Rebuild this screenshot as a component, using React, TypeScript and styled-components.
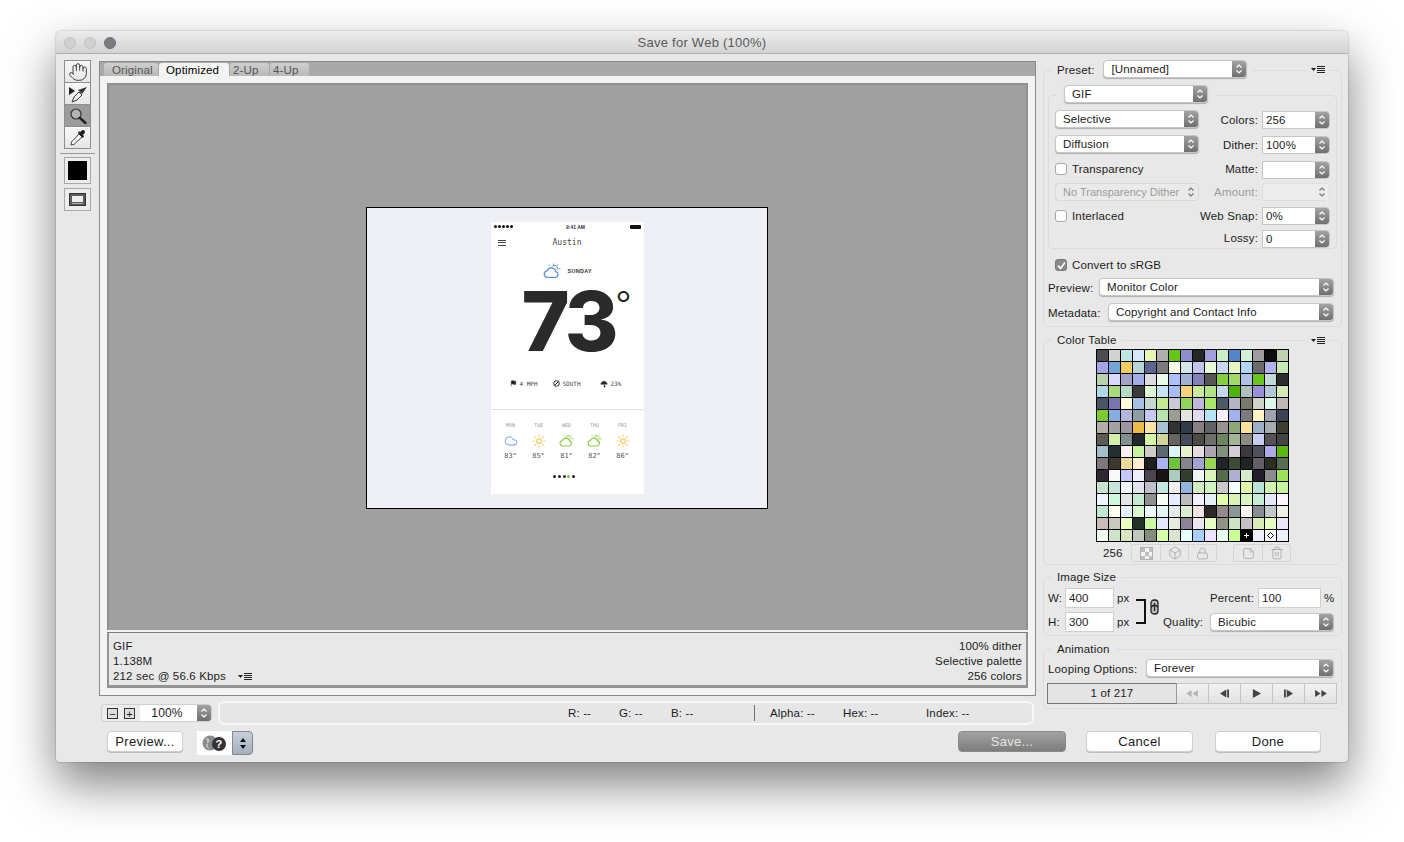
import React from "react";
import styled, { createGlobalStyle } from "styled-components";
import { Hand, Cloud, Sun, Flag, Umbrella, Lock, Box, StickyNote, Trash2 } from "lucide-react";

const GlobalStyle = createGlobalStyle`
    html, body {
        margin: 0;
        background: #fff;
    }
    body {
        font-family: "Liberation Sans", Arial, sans-serif;
        font-size: 12px;
        color: #1c1c1c;
        letter-spacing: 0.15px;
    }
    * {
        box-sizing: border-box;
    }
`;

const PANEL = "#e8e8e8";

const Page = styled.div`
    height: 842px;
    padding: 31px 0 0 56px;
    overflow: hidden;
`;

const Window = styled.div`
    width: 1292px;
    height: 731px;
    background: ${PANEL};
    border-radius: 5px 5px 4px 4px;
    box-shadow: 0 22px 48px rgba(0, 0, 0, 0.5), 0 0 2px rgba(0, 0, 0, 0.35);
    overflow: hidden;
`;

const TitleBar = styled.div`
    height: 23px;
    display: flex;
    align-items: center;
    padding: 1px 0 0 8px;
    gap: 8px;
    position: relative;
    background: linear-gradient(#ececec, #d3d3d3);
    border-bottom: 1px solid #b1b1b1;
`;

const Light = styled.span<{ $on?: boolean }>`
    width: 12px;
    height: 12px;
    border-radius: 50%;
    background: ${(p) => (p.$on ? "#7b7b82" : "#d0d0d0")};
    border: 1px solid ${(p) => (p.$on ? "#6e6e74" : "#c2c2c2")};
`;

const Title = styled.div`
    position: absolute;
    left: 0;
    right: 0;
    text-align: center;
    font-size: 13px;
    color: #5a5a5a;
    letter-spacing: 0.25px;
`;

const MainRow = styled.div`
    height: 673px;
    display: flex;
`;

/* left tools */
const ToolColumn = styled.div`
    width: 43px;
    padding: 6px 0 0 8px;
    display: flex;
    flex-direction: column;
`;

const ToolStack = styled.div`
    width: 27px;
    border: 1px solid #8e8e8e;
    display: flex;
    flex-direction: column;
`;

const Tool = styled.div<{ $active?: boolean }>`
    height: 22px;
    display: flex;
    align-items: center;
    justify-content: center;
    background: ${(p) => (p.$active ? "#9c9c9c" : "linear-gradient(#f8f8f8, #e6e6e6)")};
    &:first-child {
        height: 21px;
    }
    & + & {
        border-top: 1px solid #8e8e8e;
    }
`;

const ToolSeparator = styled.div`
    width: 35px;
    height: 1px;
    margin: 4px 0 3px -4px;
    background: #9a9a9a;
`;

const SwatchBox = styled.div`
    width: 27px;
    height: 27px;
    border: 1px solid #a8a8a8;
    background: #ededed;
    padding: 3px;
    & > div {
        width: 100%;
        height: 100%;
        background: #000;
    }
`;

const FilmBox = styled.div`
    width: 27px;
    height: 23px;
    margin-top: 4px;
    border: 1px solid #a8a8a8;
    background: #ededed;
    display: flex;
    align-items: center;
    justify-content: center;
`;

/* centre */
const Center = styled.div`
    width: 937px;
    padding-top: 7px;
`;

const Viewer = styled.div`
    height: 635px;
    border: 1px solid #8a8a8a;
    display: flex;
    flex-direction: column;
`;

const TabStrip = styled.div`
    height: 14px;
    padding-left: 4px;
    background: #a9a9a9;
    display: flex;
    gap: 1px;
    align-items: flex-end;
`;

const Tab = styled.div<{ $active?: boolean; $w: number; $pad: number }>`
    width: ${(p) => p.$w}px;
    height: 13px;
    line-height: 14px;
    padding-left: ${(p) => p.$pad}px;
    font-size: 11.5px;
    border-radius: 3px 3px 0 0;
    color: ${(p) => (p.$active ? "#000" : "#555")};
    background: ${(p) => (p.$active ? "#f4f4f4" : "linear-gradient(#cfcfcf, #b9b9b9)")};
`;

const ViewerBody = styled.div`
    flex: 1;
    min-height: 0;
    background: #f3f3f3;
    padding: 7px;
    display: flex;
    flex-direction: column;
`;

const Stage = styled.div`
    flex: 1;
    min-height: 0;
    background: #a0a0a0;
    border: 2px solid #8f8f94;
    border-bottom: none;
    display: flex;
    align-items: center;
    justify-content: center;
`;

const InfoPanel = styled.div`
    margin-top: 2px;
    height: 56px;
    padding: 6px 4px 0 4px;
    background: ${PANEL};
    border: 2px solid #939393;
    border-top: 1px solid #7e7e7e;
    border-bottom-width: 3px;
    line-height: 15px;
    font-size: 11.5px;
    display: flex;
    justify-content: space-between;
`;

const InfoLeft = styled.div`
    display: flex;
    flex-direction: column;
`;

const InfoRight = styled(InfoLeft)`
    text-align: right;
`;

const InfoLine = styled.div`
    display: flex;
    align-items: center;
    gap: 12px;
`;

const Canvas = styled.div`
    width: 402px;
    height: 302px;
    margin-right: 2px;
    border: 1px solid #000;
    background: #eef0f6;
    display: flex;
    justify-content: center;
    padding: 14px 0 0 1px;
`;

/* the exported artwork */
const Phone = styled.div`
    width: 153px;
    height: 272px;
    background: #fff;
    display: flex;
    flex-direction: column;
    color: #333;
    font-family: "DejaVu Sans Mono", monospace;
    letter-spacing: 0;
`;

const PhoneStatus = styled.div`
    height: 10px;
    padding: 0 3px;
    display: flex;
    align-items: center;
    justify-content: space-between;
    font-family: "Liberation Sans", sans-serif;
    font-size: 5px;
    font-weight: 700;
`;

const SignalDots = styled.div`
    width: 28px;
    display: flex;
    gap: 1px;
    align-items: center;
    & > i {
        width: 3px;
        height: 3px;
        border-radius: 50%;
        background: #111;
    }
`;

const Battery = styled.div`
    width: 11px;
    height: 4px;
    background: #111;
    border-radius: 1px;
`;

const PhoneNav = styled.div`
    height: 20px;
    padding: 2px 0 0 7px;
    display: flex;
    align-items: center;
    position: relative;
`;

const CityName = styled.div`
    position: absolute;
    left: 0;
    right: 0;
    text-align: center;
    font-size: 8px;
    color: #444;
`;

const Burger = styled.div`
    width: 8px;
    height: 6px;
    border-top: 1px solid #444;
    border-bottom: 1px solid #444;
    position: relative;
    &::after {
        content: "";
        position: absolute;
        left: 0;
        right: 0;
        top: 1.5px;
        height: 1px;
        background: #444;
    }
`;

const DayRow = styled.div`
    margin-top: 10px;
    height: 18px;
    padding-left: 52px;
    display: flex;
    align-items: center;
    gap: 7px;
    font-family: "Liberation Sans", sans-serif;
    font-size: 5.5px;
    font-weight: 700;
    letter-spacing: 0.3px;
`;

const BigTemp = styled.div`
    height: 78px;
    margin-top: 4px;
    padding-left: 31px;
    display: flex;
    align-items: flex-start;
    font-family: Inter, sans-serif;
    font-weight: 800;
    font-size: 82px;
    line-height: 76px;
    letter-spacing: -3.5px;
    color: #2a2a2a;
`;

const Degree = styled.span`
    font-size: 36px;
    font-weight: 300;
    line-height: 30px;
    margin-top: 5px;
    letter-spacing: 0;
    color: #222;
`;

const StatRow = styled.div`
    margin-top: 17px;
    height: 10px;
    padding-left: 19px;
    display: flex;
    align-items: center;
    font-size: 6px;
    color: #444;
`;

const Stat = styled.div<{ $w: number }>`
    width: ${(p) => p.$w}px;
    display: flex;
    align-items: center;
    gap: 3px;
`;

const PhoneRule = styled.div`
    height: 1px;
    margin-top: 20px;
    background: #e3e3e3;
`;

const Forecast = styled.div`
    margin-top: 11px;
    padding: 0 6px;
    display: grid;
    grid-template-columns: repeat(5, 28px);
`;

const DayCol = styled.div`
    display: flex;
    flex-direction: column;
    align-items: center;
`;

const DayName = styled.div`
    font-size: 5px;
    line-height: 8px;
    color: #999;
`;

const DayIcon = styled.div`
    height: 14px;
    margin-top: 5px;
    display: flex;
    align-items: center;
`;

const DayTemp = styled.div`
    margin-top: 4px;
    font-size: 7px;
    line-height: 8px;
    color: #555;
`;

const PageDots = styled.div`
    margin-top: 15px;
    padding-right: 6px;
    display: flex;
    justify-content: center;
    gap: 1.6px;
`;

const PageDot = styled.i<{ $on?: boolean }>`
    width: 3px;
    height: 3px;
    border-radius: 50%;
    background: ${(p) => (p.$on ? "#7cc52d" : "#222")};
`;

/* under the viewer */
const ZoomRow = styled.div`
    margin-top: 5px;
    display: flex;
    align-items: flex-start;
    padding-left: 2px;
`;

const ZoomControl = styled.div`
    width: 111px;
    height: 18px;
    margin-top: 3px;
    border: 1px solid #cfcfcf;
    border-radius: 4px;
    display: flex;
    align-items: stretch;
    overflow: hidden;
    background: #ececec;
`;

const ZoomBtn = styled.div`
    width: 11px;
    height: 11px;
    margin: 3px 0 0 5px;
    border: 1px solid #333;
    background: #ddd;
    display: flex;
    align-items: center;
    justify-content: center;
    font-size: 11px;
    line-height: 8px;
    letter-spacing: 0;
    & + & {
        margin-left: 6px;
    }
`;

const ZoomValue = styled.div`
    width: 57px;
    margin-left: 5px;
    padding-right: 3px;
    background: #fff;
    text-align: center;
    line-height: 17px;
`;

const StatusBox = styled.div`
    width: 816px;
    height: 24px;
    margin-left: 6px;
    border: 2px solid #f7f7f7;
    border-radius: 6px;
    background: #e6e6e6;
    font-size: 11.5px;
    display: flex;
    align-items: center;
    padding-left: 348px;
`;

const StatusItem = styled.span<{ $w: number }>`
    width: ${(p) => p.$w}px;
    flex: none;
`;

const StatusRule = styled.span`
    width: 1px;
    height: 16px;
    background: #6e6e6e;
    margin-right: 15px;
`;

/* right side */
const RightPanel = styled.div`
    width: 312px;
    padding: 16px 0 0 7px;
`;

const Group = styled.div<{ $w?: number; $mt?: number; $pb?: number; $ml?: number }>`
    width: ${(p) => p.$w ?? 299}px;
    margin-top: ${(p) => p.$mt ?? 0}px;
    margin-left: ${(p) => p.$ml ?? 0}px;
    padding-bottom: ${(p) => p.$pb ?? 0}px;
    border: 1px solid #dcdcdc;
    border-radius: 5px;
`;

const GroupHead = styled.div<{ $h: number; $pull: number; $left: number }>`
    height: ${(p) => p.$h}px;
    margin-top: -${(p) => p.$pull}px;
    padding: 0 11px 0 ${(p) => p.$left}px;
    display: flex;
    align-items: center;
    justify-content: space-between;
`;

const Chip = styled.div<{ $px?: number }>`
    display: flex;
    align-items: center;
    gap: 9px;
    padding: 0 ${(p) => p.$px ?? 5}px;
    background: ${PANEL};
    font-size: 11.5px;
`;

const ChipLabel = styled.span`
    padding-top: 2px;
`;

const SelectBox = styled.div<{ $w: number; $off?: boolean }>`
    width: ${(p) => p.$w}px;
    height: 18px;
    flex: none;
    display: flex;
    border-radius: 4px;
    overflow: hidden;
    border: 1px solid ${(p) => (p.$off ? "#d8d8d8" : "#c6c6c6")};
    background: ${(p) => (p.$off ? "#eaeaea" : "#fff")};
    box-shadow: ${(p) => (p.$off ? "none" : "0 1px 1px rgba(0,0,0,0.25)")};
    color: ${(p) => (p.$off ? "#9b9b9b" : "#1c1c1c")};
    line-height: 16px;
    font-size: ${(p) => (p.$off ? 11 : 11.5)}px;
    letter-spacing: ${(p) => (p.$off ? 0 : 0.15)}px;
`;

const SelectText = styled.div`
    flex: 1;
    padding-left: 7px;
    white-space: nowrap;
`;

const Stepper = styled.div<{ $off?: boolean }>`
    width: 14px;
    flex: none;
    display: flex;
    align-items: center;
    justify-content: center;
    background: ${(p) => (p.$off ? "transparent" : "linear-gradient(#a3a3a3, #6f6f6f)")};
    color: ${(p) => (p.$off ? "#777" : "#fff")};
`;

const UpDown = () => (
    <svg width="8" height="12" viewBox="0 0 8 12" fill="none" stroke="currentColor" strokeWidth="1.2">
        <path d="M1.5 4.5 4 2l2.5 2.5M1.5 7.5 4 10l2.5-2.5" />
    </svg>
);

const Select = ({ w, text, off }: { w: number; text: string; off?: boolean }) => (
    <SelectBox $w={w} $off={off}>
        <SelectText>{text}</SelectText>
        <Stepper $off={off}>
            <UpDown />
        </Stepper>
    </SelectBox>
);

const MenuGlyph = () => (
    <svg width="15" height="9" viewBox="0 0 15 9" fill="#222">
        <path d="M0 3h5L2.5 6z" />
        <path d="M6 1h8v1H6zM6 3h8v1H6zM6 5h8v1H6zM6 7h8v1H6z" />
    </svg>
);

const InnerGrid = styled.div`
    margin: 7px 0 0 6px;
    display: grid;
    grid-template-columns: 144px 59px 72px;
    grid-template-rows: 25px 25px 23px 24px 23px 18px;
    align-items: start;
`;

const RowLabel = styled.div<{ $off?: boolean; $tight?: boolean; $lh?: number }>`
    text-align: right;
    line-height: ${(p) => p.$lh ?? 18}px;
    padding-top: ${(p) => (p.$tight ? 0 : 1)}px;
    font-size: 11.5px;
    color: ${(p) => (p.$off ? "#9b9b9b" : "#1c1c1c")};
`;

const FieldBox = styled.div<{ $nudge?: boolean; $off?: boolean }>`
    width: 68px;
    height: 18px;
    margin: ${(p) => (p.$nudge ? 1 : 0)}px 0 0 4px;
    display: flex;
    border-radius: 0 4px 4px 0;
    overflow: hidden;
    border: 1px solid ${(p) => (p.$off ? "#dedede" : "#c6c6c6")};
    background: ${(p) => (p.$off ? "#ececec" : "#fff")};
    font-size: 11.5px;
    line-height: 16px;
`;

const FieldText = styled.div`
    flex: 1;
    padding-left: 3px;
`;

const Field = ({ text, nudge, off }: { text?: string; nudge?: boolean; off?: boolean }) => (
    <FieldBox $nudge={nudge} $off={off}>
        <FieldText>{text}</FieldText>
        <Stepper $off={off}>
            <UpDown />
        </Stepper>
    </FieldBox>
);

const CheckRow = styled.div`
    height: 18px;
    display: flex;
    align-items: center;
    gap: 5px;
    font-size: 11.5px;
`;

const CheckBox = styled.span<{ $checked?: boolean }>`
    width: 12px;
    height: 12px;
    flex: none;
    border-radius: 3px;
    border: 1px solid ${(p) => (p.$checked ? "#777" : "#a8a8a8")};
    background: ${(p) => (p.$checked ? "#8a8a8a" : "#fff")};
    display: flex;
    align-items: center;
    justify-content: center;
`;

const ConvertRow = styled(CheckRow)`
    margin: 7px 0 0 11px;
`;

const LabelledRow = styled.div<{ $mt: number }>`
    margin: ${(p) => p.$mt}px 0 0 4px;
    display: flex;
    height: 18px;
    align-items: center;
    font-size: 11.5px;
`;

const RowCaption = styled.div<{ $w: number }>`
    width: ${(p) => p.$w}px;
    flex: none;
    padding-top: 1px;
`;

const GroupEnd = styled.div`
    height: 5px;
`;

const ColorGrid = styled.div`
    width: 193px;
    margin: 2px 0 0 52px;
    padding: 1px;
    display: grid;
    grid-template-columns: repeat(16, 11px);
    grid-auto-rows: 11px;
    gap: 1px;
    background: #000;
`;

const ColorCell = styled.div<{ $c: string }>`
    background: ${(p) => p.$c};
    display: flex;
    align-items: center;
    justify-content: center;
`;

const TableFooter = styled.div`
    margin: 2px 0 0 59px;
    height: 18px;
    display: flex;
    align-items: center;
`;

const CountLabel = styled.div`
    width: 28px;
    font-size: 11.5px;
`;

const IconGroup = styled.div<{ $ml?: number }>`
    display: flex;
    height: 18px;
    margin-left: ${(p) => p.$ml ?? 0}px;
    border: 1px solid #d6d6d6;
    border-radius: 2px;
`;

const IconCell = styled.div`
    width: 28px;
    display: flex;
    align-items: center;
    justify-content: center;
    color: #a9a9a9;
    & + & {
        border-left: 1px solid #d6d6d6;
    }
`;

const SizeBody = styled.div`
    margin: 4px 0 0 4px;
    display: flex;
`;

const SizeColumn = styled.div`
    width: 88px;
    display: flex;
    flex-direction: column;
    gap: 4px;
    font-size: 11.5px;
`;

const SizeRow = styled.div`
    height: 20px;
    display: flex;
    align-items: center;
`;

const SizeLabel = styled.div<{ $w: number; $align?: string }>`
    width: ${(p) => p.$w}px;
    flex: none;
    text-align: ${(p) => p.$align ?? "left"};
`;

const SizeInput = styled.div<{ $w: number; $ml?: number }>`
    width: ${(p) => p.$w}px;
    height: 20px;
    flex: none;
    padding-left: 3px;
    margin: 0 3px 0 ${(p) => p.$ml ?? 0}px;
    background: #fff;
    border: 1px solid #d0d0d0;
    line-height: 18px;
`;

const Linker = styled.div`
    width: 27px;
    flex: none;
    padding-top: 11px;
    display: flex;
    gap: 3px;
    align-items: flex-start;
`;

const QualityColumn = styled(SizeColumn)`
    width: 172px;
`;

const FrameRow = styled.div`
    margin: 6px 0 0 3px;
    display: flex;
    height: 21px;
`;

const FrameCount = styled.div`
    width: 130px;
    border: 1px solid #777;
    border-right-color: #999;
    background: #e4e4e4;
    text-align: center;
    line-height: 18px;
    font-size: 11.5px;
`;

const PlayBtn = styled.div<{ $off?: boolean }>`
    width: 32px;
    border: 1px solid #c4c4c4;
    border-left: none;
    background: linear-gradient(#f2f2f2, #e2e2e2);
    display: flex;
    align-items: center;
    justify-content: center;
    color: ${(p) => (p.$off ? "#b4b4b4" : "#444")};
`;

/* window buttons */
const BottomRow = styled.div`
    margin-top: 4px;
    padding: 0 27px 0 51px;
    display: flex;
    align-items: flex-start;
`;

const PushButton = styled.div<{ $w: number; $ml?: number }>`
    width: ${(p) => p.$w}px;
    height: 21px;
    margin-left: ${(p) => p.$ml ?? 0}px;
    background: #fff;
    border: 1px solid #cfcfcf;
    border-radius: 4px;
    box-shadow: 0 1px 0 #bdbdbd;
    text-align: center;
    font-size: 13px;
    line-height: 19px;
    letter-spacing: 0.3px;
`;

const SaveButton = styled(PushButton)`
    background: linear-gradient(#a2a2a2, #7d7d7d);
    border-color: #8a8a8a;
    color: #e6e6e6;
    box-shadow: none;
`;

const BrowserPick = styled.div`
    margin-left: 14px;
    display: flex;
    height: 24px;
`;

const BrowserIcon = styled.div`
    width: 35px;
    background: #fff;
    display: flex;
    align-items: center;
    justify-content: center;
`;

const BrowserStepper = styled.div`
    width: 21px;
    border: 1px solid #888;
    border-radius: 0 4px 4px 0;
    background: linear-gradient(#c7d0dc, #a4afbd);
    display: flex;
    align-items: center;
    justify-content: center;
`;

const Spacer = styled.div`
    flex: 1;
`;

const PALETTE = `
4a4c52 d2d2d2 bfe5e3 d6e8ff e6f7b4 b0b0b0 62c716 8d8fcc 262626 a09fdc c9efc8 5285c9 d3f1d8 9d9d9d 0c0c0c c0d0ac
a4a3e6 74a5d8 f3cd62 b7d5d6 5a6592 7a7a7a f8ffe8 d2e6e8 c1c4ec e6f8d8 c9d8f8 e6f7c8 b0d6fa 6b6b6b b2b2ea c5e8b4
b8d2ae d8d8fa a2a2c6 a0aeea dcdce0 ecf8ea aec0fa a0b2d4 8282ba 565656 84cf40 a2da6a b0c0e8 68c41e c0dada 2a2c2e
b0d6e8 a8da7c b6d8c6 3c3c3c dcf8d4 c6e4f6 a4c0f4 f5d47a c6ec9c b2e482 c4d6ea 4cb20c aec0be 9890d8 b0c8da d4ecb4
4a5466 7874ae fffad8 a4c2e6 c4d8cc c4ea8e c8c8d8 90d45c c0b8dc a6e868 4c5a66 b4b4c4 7a7a6c d0d4c8 dcf8e8 c0b8b8
7ccc30 86ade4 b2b6dc 8e9ea6 c4c8f8 b8e2ae 9a9e90 e4e4dc e4daf0 b4e4f8 f6eef8 a2b2f0 7c7c7c fff6c4 a0a2b0 3e4252
b4aea8 a2a2a2 9c94a0 eebc46 fee4a6 a6c0d4 303234 303c46 868080 606264 9a9290 8ea878 fae29a 9cb0c8 a4aeae 3c3e34
5c5c54 d4f0a8 80908e 24282c d4f8a4 d0d69a 686462 444c5a 4c4a44 6c6e6c 6e8660 a2b498 8a8c80 c8ccf0 545454 444444
a0c0cc 243030 f8f0ee c4f4a0 d0ccc8 5a6a70 d8f6fc e6f0cc e6dede aca4ae 82907e d4ccd6 3c3840 50505a aeaae8 58b810
7c787c 3c3830 eeda9a ffeed0 1c2020 aab4f0 70c438 88848c a4a4d4 98d850 202428 3e4a38 1e2420 645c66 2c2e24 5c6c54
302830 f8f8f8 c8c8f8 eeeefa 4c4450 1c1414 a8ccc0 343e2c eef4f8 d8f6b8 566a4c aeaed0 d4eccc 241c28 8c8c8c 98e458
c8e4d0 c4e4dc f8f8ff e4e4f0 c0c0cc c4e8e0 f0f0f0 90b4dc d0ecc0 d0f4c0 c8c8c8 f4ffff e0f8a8 b8e4d8 d0f4b0 c8f49c
f0f6ff d0f8dc e4e4e4 c4ecd0 909090 f8fff4 e4ecff bcbcbc f0f0ff e4eef4 e0ffa8 d8f4b0 d8f6c0 c8ecd4 e4e8f8 fcf4ff
c0e8d0 fffff0 e4f4ff d8f8d0 f0ffff e4f6f4 e0ecec dcecd0 eee4e4 2c2824 948888 8c9898 fff8f4 888c94 c0c8c8 eef0e4
c8bcbc c8c8bc e8ffc0 24302a ccf8a0 e4e8ff e4ece0 8c8494 eee4f0 e4ffc0 909484 cce4c0 c8c0c8 d8ecb4 e4ffc0 ece4f8
f0fff0 cce4cc dce4c0 c0c8bc 848c7c d4ffa8 dce4d0 e8ffff a8d0ff ece4ff e8fff0 c8ff90 000000 f0f0fc ffffff ecf0f8
`.trim().split(/\s+/);

const FORECAST = [
    { day: "MON", temp: "83°", kind: "cloud" },
    { day: "TUE", temp: "85°", kind: "sun" },
    { day: "WED", temp: "81°", kind: "partly" },
    { day: "THU", temp: "82°", kind: "partly" },
    { day: "FRI", temp: "86°", kind: "sun" },
];

// cloud in front with a small sun peeking out top right
const PartlyCloudy = ({ size, color }: { size: number; color: string }) => (
    <svg width={size} height={size * 0.85} viewBox="0 0 20 17" fill="none" stroke={color} strokeWidth="1.5" strokeLinecap="round">
        <path d="M4.500 16h9a3.300 3.300 0 0 0 .6-6.500 5 5 0 0 0-9.600-.8A3.700 3.700 0 0 0 4.500 16z" />
        <path d="M9.500 4.500a3.500 3.500 0 0 1 6.500 2.500M12 1v1M16.500 2l-1 1M19 6.500h-1.200M6.500 2l.7 1" strokeWidth="1.100" />
    </svg>
);

const WeatherIcon = ({ kind }: { kind: string }) => {
    if (kind === "cloud") return <Cloud size={14} color="#5f93d8" strokeWidth={1.5} />;
    if (kind === "sun") return <Sun size={14} color="#f5c04a" strokeWidth={1.8} />;
    return <PartlyCloudy size={15} color="#8ccb45" />;
};

const SliceIcon = () => (
    <svg width="22" height="20" viewBox="0 0 22 20">
        <path d="M2 3l6 4-6 4z" fill="#222" />
        <path d="M20 3l-9 3 4 4z" fill="#333" />
        <path d="M12 8l3 3-5 5-5 2 2-5z" fill="#eee" stroke="#333" strokeWidth="1" />
    </svg>
);

const ZoomIcon = () => (
    <svg width="18" height="18" viewBox="0 0 18 18">
        <circle cx="7" cy="7" r="5" fill="#b4b4b4" stroke="#333" strokeWidth="1.2" />
        <path d="M11 11l5.500 5" stroke="#222" strokeWidth="2.400" strokeLinecap="round" />
    </svg>
);

const DropperIcon = () => (
    <svg width="18" height="18" viewBox="0 0 18 18">
        <path d="M10 5L2.500 13 2 16l3-.6L13 8z" fill="#f6f6f6" stroke="#444" strokeWidth="1" />
        <path d="M9 4l5 5 1-2-1-1 2-2.500c.5-1.500-1-3-2.500-2.500L11 3 10 2z" fill="#222" />
    </svg>
);

const FilmIcon = () => (
    <svg width="17" height="13" viewBox="0 0 17 13">
        <rect x="0.500" y="0.500" width="16" height="12" fill="#5c5c5c" stroke="#333" />
        <rect x="3" y="3" width="11" height="6" fill="#eee" />
        <rect x="3" y="10" width="11" height="1" fill="#aaa" />
    </svg>
);

const CheckMark = () => (
    <svg width="9" height="9" viewBox="0 0 9 9" fill="none" stroke="#fff" strokeWidth="1.600">
        <path d="M1 4.500 3.500 7.500 8 1.500" />
    </svg>
);

const DitherIcon = () => (
    <svg width="13" height="13" viewBox="0 0 13 13">
        <rect x="0.500" y="0.500" width="12" height="12" fill="#f4f4f4" stroke="#b0b0b0" />
        <path d="M1 1h4v4H1zM5 5h4v4H5zM9 1h3v4H9zM1 9h4v3H1zM9 9h3v3H9z" fill="#bdbdbd" />
    </svg>
);

const BracketIcon = () => (
    <svg width="11" height="25" viewBox="0 0 11 25" fill="none" stroke="#111" strokeWidth="2">
        <path d="M0 1h9v23H0" />
    </svg>
);

const LinkIcon = () => (
    <svg width="9" height="16" viewBox="0 0 9 16" fill="#bbb" stroke="#222" strokeWidth="1.300">
        <rect x="1" y="1" width="7" height="8.500" rx="3" />
        <rect x="1" y="6.500" width="7" height="8.500" rx="3" />
        <path d="M4.500 4v8" />
    </svg>
);

const HelpIcon = () => (
    <svg width="26" height="18" viewBox="0 0 26 18">
        <circle cx="8" cy="9" r="7.500" fill="#8a8a8a" />
        <path d="M4 4c3 0 4 2 3 4s-3 1-3 3 2 3 3 5" fill="#c4c4c4" />
        <circle cx="17" cy="10" r="7" fill="#333" />
        <text x="17" y="14" textAnchor="middle" fontSize="11" fontWeight="700" fontFamily="Liberation Sans" fill="#fff">?</text>
    </svg>
);

const PlayGlyph = ({ d }: { d: string }) => (
    <svg width="13" height="9" viewBox="0 0 14 10" fill="currentColor">
        <path d={d} />
    </svg>
);

const CompassDot = () => (
    <svg width="7" height="7" viewBox="0 0 7 7" fill="none" stroke="#222" strokeWidth="1">
        <circle cx="3.500" cy="3.500" r="2.800" />
        <path d="M2 5l3-3" />
    </svg>
);

const App = () => {
    return (
        <Page>
            <GlobalStyle />
            <Window>
                <TitleBar>
                    <Light />
                    <Light />
                    <Light $on />
                    <Title>Save for Web (100%)</Title>
                </TitleBar>
                <MainRow>
                    <ToolColumn>
                        <ToolStack>
                            <Tool><Hand size={20} strokeWidth={1.1} color="#333" /></Tool>
                            <Tool><SliceIcon /></Tool>
                            <Tool $active><ZoomIcon /></Tool>
                            <Tool><DropperIcon /></Tool>
                        </ToolStack>
                        <ToolSeparator />
                        <SwatchBox><div /></SwatchBox>
                        <FilmBox><FilmIcon /></FilmBox>
                    </ToolColumn>

                    <Center>
                        <Viewer>
                            <TabStrip>
                                <Tab $w={54} $pad={8}>Original</Tab>
                                <Tab $w={70} $pad={7} $active>Optimized</Tab>
                                <Tab $w={39} $pad={3}>2-Up</Tab>
                                <Tab $w={39} $pad={3}>4-Up</Tab>
                            </TabStrip>
                            <ViewerBody>
                                <Stage>
                                    <Canvas>
                                        <Phone>
                                            <PhoneStatus>
                                                <SignalDots>
                                                    <i /><i /><i /><i /><i />
                                                </SignalDots>
                                                <span>9:41 AM</span>
                                                <Battery />
                                            </PhoneStatus>
                                            <PhoneNav>
                                                <Burger />
                                                <CityName>Austin</CityName>
                                            </PhoneNav>
                                            <DayRow>
                                                <PartlyCloudy size={18} color="#5f93d8" />
                                                <span>SUNDAY</span>
                                            </DayRow>
                                            <BigTemp>
                                                73<Degree>°</Degree>
                                            </BigTemp>
                                            <StatRow>
                                                <Stat $w={43}>
                                                    <Flag size={7} fill="#222" strokeWidth={1.5} />
                                                    4 MPH
                                                </Stat>
                                                <Stat $w={47}>
                                                    <CompassDot />
                                                    SOUTH
                                                </Stat>
                                                <Stat $w={30}>
                                                    <Umbrella size={8} fill="#222" strokeWidth={1.5} />
                                                    23%
                                                </Stat>
                                            </StatRow>
                                            <PhoneRule />
                                            <Forecast>
                                                {FORECAST.map((f) => (
                                                    <DayCol key={f.day}>
                                                        <DayName>{f.day}</DayName>
                                                        <DayIcon><WeatherIcon kind={f.kind} /></DayIcon>
                                                        <DayTemp>{f.temp}</DayTemp>
                                                    </DayCol>
                                                ))}
                                            </Forecast>
                                            <PageDots>
                                                <PageDot /><PageDot /><PageDot /><PageDot $on /><PageDot />
                                            </PageDots>
                                        </Phone>
                                    </Canvas>
                                </Stage>
                                <InfoPanel>
                                    <InfoLeft>
                                        <div>GIF</div>
                                        <div>1.138M</div>
                                        <InfoLine>
                                            212 sec @ 56.6 Kbps
                                            <MenuGlyph />
                                        </InfoLine>
                                    </InfoLeft>
                                    <InfoRight>
                                        <div>100% dither</div>
                                        <div>Selective palette</div>
                                        <div>256 colors</div>
                                    </InfoRight>
                                </InfoPanel>
                            </ViewerBody>
                        </Viewer>
                        <ZoomRow>
                            <ZoomControl>
                                <ZoomBtn>−</ZoomBtn>
                                <ZoomBtn>+</ZoomBtn>
                                <ZoomValue>100%</ZoomValue>
                                <Stepper><UpDown /></Stepper>
                            </ZoomControl>
                            <StatusBox>
                                <StatusItem $w={51}>R: --</StatusItem>
                                <StatusItem $w={52}>G: --</StatusItem>
                                <StatusItem $w={83}>B: --</StatusItem>
                                <StatusRule />
                                <StatusItem $w={73}>Alpha: --</StatusItem>
                                <StatusItem $w={83}>Hex: --</StatusItem>
                                <StatusItem $w={60}>Index: --</StatusItem>
                            </StatusBox>
                        </ZoomRow>
                    </Center>

                    <RightPanel>
                        <Group>
                            <GroupHead $h={18} $pull={11} $left={8}>
                                <Chip>
                                    <ChipLabel>Preset:</ChipLabel>
                                    <Select w={144} text="[Unnamed]" />
                                </Chip>
                                <Chip $px={4}><MenuGlyph /></Chip>
                            </GroupHead>
                            <Group $w={289} $mt={17} $ml={4}>
                                <GroupHead $h={18} $pull={11} $left={8}>
                                    <Chip $px={7}><Select w={144} text="GIF" /></Chip>
                                </GroupHead>
                                <InnerGrid>
                                    <Select w={144} text="Selective" />
                                    <RowLabel>Colors:</RowLabel>
                                    <Field text="256" nudge />
                                    <Select w={144} text="Diffusion" />
                                    <RowLabel>Dither:</RowLabel>
                                    <Field text="100%" nudge />
                                    <CheckRow><CheckBox />Transparency</CheckRow>
                                    <RowLabel $tight>Matte:</RowLabel>
                                    <Field nudge />
                                    <Select w={144} text="No Transparency Dither" off />
                                    <RowLabel $off $tight>Amount:</RowLabel>
                                    <Field off />
                                    <CheckRow><CheckBox />Interlaced</CheckRow>
                                    <RowLabel $tight>Web Snap:</RowLabel>
                                    <Field text="0%" />
                                    <span />
                                    <RowLabel $tight $lh={17}>Lossy:</RowLabel>
                                    <Field text="0" />
                                </InnerGrid>
                            </Group>
                            <ConvertRow>
                                <CheckBox $checked><CheckMark /></CheckBox>
                                Convert to sRGB
                            </ConvertRow>
                            <LabelledRow $mt={4}>
                                <RowCaption $w={51}>Preview:</RowCaption>
                                <Select w={235} text="Monitor Color" />
                            </LabelledRow>
                            <LabelledRow $mt={7}>
                                <RowCaption $w={60}>Metadata:</RowCaption>
                                <Select w={226} text="Copyright and Contact Info" />
                            </LabelledRow>
                            <GroupEnd />
                        </Group>

                        <Group $mt={13} $pb={2}>
                            <GroupHead $h={14} $pull={8} $left={8}>
                                <Chip>Color Table</Chip>
                                <Chip $px={4}><MenuGlyph /></Chip>
                            </GroupHead>
                            <ColorGrid>
                                {PALETTE.map((c, i) => (
                                    <ColorCell key={i} $c={`#${c}`}>
                                        {i === 252 && (
                                            <svg width="5" height="5" viewBox="0 0 5 5" fill="#fff">
                                                <path d="M2 0h1v2h2v1H3v2H2V3H0V2h2z" />
                                            </svg>
                                        )}
                                        {i === 254 && (
                                            <svg width="7" height="7" viewBox="0 0 7 7" fill="#fff" stroke="#000">
                                                <path d="M3.500 0.500l3 3-3 3-3-3z" />
                                            </svg>
                                        )}
                                    </ColorCell>
                                ))}
                            </ColorGrid>
                            <TableFooter>
                                <CountLabel>256</CountLabel>
                                <IconGroup>
                                    <IconCell><DitherIcon /></IconCell>
                                    <IconCell><Box size={14} strokeWidth={1.5} /></IconCell>
                                    <IconCell><Lock size={13} strokeWidth={1.5} /></IconCell>
                                </IconGroup>
                                <IconGroup $ml={16}>
                                    <IconCell><StickyNote size={13} strokeWidth={1.5} /></IconCell>
                                    <IconCell><Trash2 size={14} strokeWidth={1.5} /></IconCell>
                                </IconGroup>
                            </TableFooter>
                        </Group>

                        <Group $mt={12} $pb={3}>
                            <GroupHead $h={14} $pull={8} $left={8}>
                                <Chip>Image Size</Chip>
                            </GroupHead>
                            <SizeBody>
                                <SizeColumn>
                                    <SizeRow>
                                        <SizeLabel $w={17}>W:</SizeLabel>
                                        <SizeInput $w={49}>400</SizeInput>
                                        px
                                    </SizeRow>
                                    <SizeRow>
                                        <SizeLabel $w={17}>H:</SizeLabel>
                                        <SizeInput $w={49}>300</SizeInput>
                                        px
                                    </SizeRow>
                                </SizeColumn>
                                <Linker>
                                    <BracketIcon />
                                    <LinkIcon />
                                </Linker>
                                <QualityColumn>
                                    <SizeRow>
                                        <SizeLabel $w={91} $align="right">Percent:</SizeLabel>
                                        <SizeInput $w={63} $ml={4}>100</SizeInput>
                                        %
                                    </SizeRow>
                                    <SizeRow>
                                        <SizeLabel $w={47}>Quality:</SizeLabel>
                                        <Select w={124} text="Bicubic" />
                                    </SizeRow>
                                </QualityColumn>
                            </SizeBody>
                        </Group>

                        <Group $mt={13} $pb={4}>
                            <GroupHead $h={14} $pull={8} $left={8}>
                                <Chip>Animation</Chip>
                            </GroupHead>
                            <LabelledRow $mt={3}>
                                <RowCaption $w={98}>Looping Options:</RowCaption>
                                <Select w={188} text="Forever" />
                            </LabelledRow>
                            <FrameRow>
                                <FrameCount>1 of 217</FrameCount>
                                <PlayBtn $off><PlayGlyph d="M0 5l6-4v8zM7 5l6-4v8z" /></PlayBtn>
                                <PlayBtn><PlayGlyph d="M2 5l7-4.500v9zM10 .5h2v9h-2z" /></PlayBtn>
                                <PlayBtn><PlayGlyph d="M3 0l9 5-9 5z" /></PlayBtn>
                                <PlayBtn><PlayGlyph d="M2 .5h2v9H2zM5 .5l7 4.500-7 4.500z" /></PlayBtn>
                                <PlayBtn><PlayGlyph d="M1 1l6 4-6 4zM8 1l6 4-6 4z" /></PlayBtn>
                            </FrameRow>
                        </Group>
                    </RightPanel>
                </MainRow>

                <BottomRow>
                    <PushButton $w={76}>Preview...</PushButton>
                    <BrowserPick>
                        <BrowserIcon><HelpIcon /></BrowserIcon>
                        <BrowserStepper>
                            <svg width="8" height="13" viewBox="0 0 8 13" fill="#111">
                                <path d="M4 1l3 4H1zM4 12l3-4H1z" />
                            </svg>
                        </BrowserStepper>
                    </BrowserPick>
                    <Spacer />
                    <SaveButton $w={108}>Save...</SaveButton>
                    <PushButton $w={107} $ml={20}>Cancel</PushButton>
                    <PushButton $w={106} $ml={22}>Done</PushButton>
                </BottomRow>
            </Window>
        </Page>
    );
};

export default App;
